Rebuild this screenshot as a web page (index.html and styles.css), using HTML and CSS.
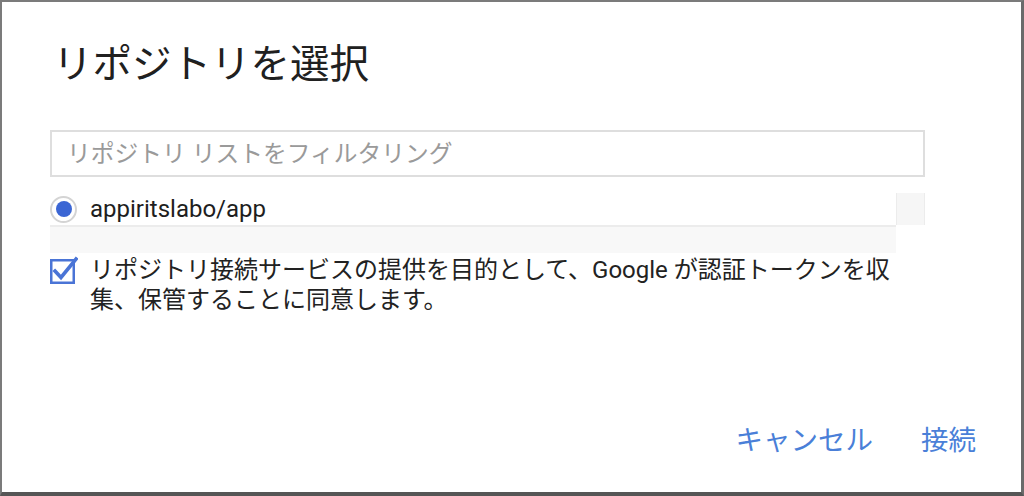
FILE: index.html
```html
<!DOCTYPE html>
<html lang="ja">
<head>
<meta charset="utf-8">
<title>リポジトリを選択</title>
<link rel="stylesheet" href="styles.css">
</head>
<body>
<div class="dialog">
  <h1 class="title">リポジトリを選択</h1>
  <div class="filter">
    <input class="filter-input" type="text" placeholder="リポジトリ リストをフィルタリング">
  </div>
  <div class="repo-list">
    <div class="repo-row">
      <div class="repo-item">
        <span class="radio"><span class="radio-dot"></span></span>
        <span class="repo-name">appiritslabo/app</span>
      </div>
      <div class="scroll-track"></div>
    </div>
    <div class="repo-footer"></div>
  </div>
  <div class="consent">
    <svg class="checkbox" width="28" height="30" viewBox="0 0 28 30" aria-hidden="true">
      <rect x="1.25" y="4.25" width="22.5" height="22.5" fill="none" stroke="#4a74d6" stroke-width="2.5"/>
      <path d="M5 15 L11 21.5 L26 3" fill="none" stroke="#4a74d6" stroke-width="3.6" stroke-linecap="square" stroke-linejoin="miter"/>
    </svg>
    <p class="consent-text">リポジトリ接続サービスの提供を目的として、Google が認証トークンを収集、保管することに同意します。</p>
  </div>
  <div class="actions">
    <span class="btn">キャンセル</span>
    <span class="btn">接続</span>
  </div>
</div>
</body>
</html>
```

FILE: styles.css
```css
html, body {
  margin: 0;
  padding: 0;
  height: 100%;
  background: #ffffff;
}

.dialog {
  box-sizing: border-box;
  height: 100vh;
  display: flex;
  flex-direction: column;
  border-top: 2px solid #7b7b7b;
  border-left: 2px solid #7b7b7b;
  border-right: 3px solid #6a6a6a;
  border-bottom: 4px solid #555555;
  padding: 0 0 0 48px;
  font-family: Roboto, "Noto Sans CJK JP", sans-serif;
  color: #222222;
}

.title {
  margin: 40px 0 0 3px;
  font-size: 39.5px;
  line-height: 46px;
  font-weight: 400;
  color: #202020;
}

.filter {
  margin-top: 42px;
  width: 875px;
}

.filter-input {
  box-sizing: border-box;
  width: 100%;
  height: 47px;
  border: 2px solid #dedede;
  padding: 0 0 0 15px;
  margin: 0;
  outline: none;
  font-family: Roboto, "Noto Sans CJK JP", sans-serif;
  font-size: 23.75px;
  color: #222;
  background: #fff;
}

.filter-input::placeholder {
  color: #9a9a9a;
}

.repo-list {
  margin-top: 16px;
  width: 875px;
}

.repo-row {
  display: flex;
  height: 32px;
}

.repo-item {
  width: 846px;
  display: flex;
  align-items: center;
  gap: 13px;
}

.radio {
  box-sizing: border-box;
  width: 27px;
  height: 27px;
  border-radius: 50%;
  border: 2px solid #d4d4d4;
  display: flex;
  align-items: center;
  justify-content: center;
  background: #fff;
}

.radio-dot {
  width: 16px;
  height: 16px;
  border-radius: 50%;
  background: #3b66d4;
}

.repo-name {
  font-size: 24px;
  line-height: 32px;
  color: #1e1e1e;
}

.scroll-track {
  box-sizing: border-box;
  width: 29px;
  background: #f6f6f6;
  border-left: 1px solid #ececec;
  border-right: 1px solid #ececec;
}

.repo-footer {
  box-sizing: border-box;
  width: 846px;
  height: 28px;
  border-top: 2px solid #ececec;
  background: #f8f8f8;
}

.consent {
  margin-top: 2px;
  display: flex;
  align-items: flex-start;
  gap: 12px;
  width: 850px;
}

.checkbox {
  flex: none;
  margin-top: 1px;
}

.consent-text {
  margin: 0;
  font-size: 24px;
  line-height: 30px;
  color: #222222;
}

.actions {
  margin-top: auto;
  display: flex;
  justify-content: flex-end;
  gap: 48px;
  padding: 0 45px 33px 0;
}

.btn {
  font-size: 27.5px;
  line-height: 36px;
  color: #4a7fd8;
}
```
